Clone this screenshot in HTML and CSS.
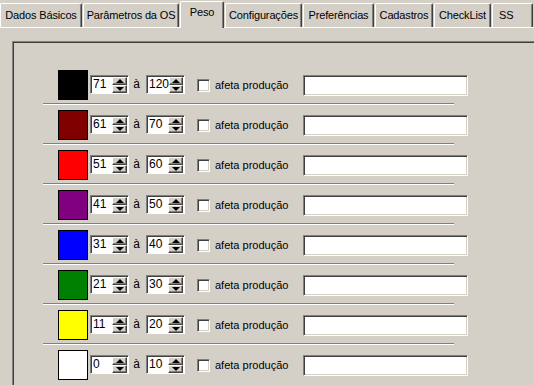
FILE: index.html
```html
<!DOCTYPE html>
<html lang="pt">
<head>
    <meta charset="UTF-8">
    <title>Peso</title>
    <link rel="stylesheet" href="styles.css">
</head>
<body>
    <div class="tabs">
        <div class="tab">Dados Básicos</div>
        <div class="tab">Parâmetros da OS</div>
        <div class="tab active">Peso</div>
        <div class="tab">Configurações</div>
        <div class="tab">Preferências</div>
        <div class="tab">Cadastros</div>
        <div class="tab">CheckList</div>
        <div class="tab">SS</div>
    </div>

    <div class="page">
        <div class="frame">

            <div class="row">
                <div class="fields">
                    <div class="swatch swatch-black"></div>
                    <div class="spin"><span class="spin-val">71</span><span class="spin-btns"><i class="up"></i><i class="down"></i></span></div>
                    <span class="ate">à</span>
                    <div class="spin"><span class="spin-val">120</span><span class="spin-btns"><i class="up"></i><i class="down"></i></span></div>
                    <span class="check"></span>
                    <label class="check-label">afeta produção</label>
                    <input class="obs" type="text">
                </div>
                <div class="sep"></div>
            </div>

            <div class="row">
                <div class="fields">
                    <div class="swatch swatch-maroon"></div>
                    <div class="spin"><span class="spin-val">61</span><span class="spin-btns"><i class="up"></i><i class="down"></i></span></div>
                    <span class="ate">à</span>
                    <div class="spin"><span class="spin-val">70</span><span class="spin-btns"><i class="up"></i><i class="down"></i></span></div>
                    <span class="check"></span>
                    <label class="check-label">afeta produção</label>
                    <input class="obs" type="text">
                </div>
                <div class="sep"></div>
            </div>

            <div class="row">
                <div class="fields">
                    <div class="swatch swatch-red"></div>
                    <div class="spin"><span class="spin-val">51</span><span class="spin-btns"><i class="up"></i><i class="down"></i></span></div>
                    <span class="ate">à</span>
                    <div class="spin"><span class="spin-val">60</span><span class="spin-btns"><i class="up"></i><i class="down"></i></span></div>
                    <span class="check"></span>
                    <label class="check-label">afeta produção</label>
                    <input class="obs" type="text">
                </div>
                <div class="sep"></div>
            </div>

            <div class="row">
                <div class="fields">
                    <div class="swatch swatch-purple"></div>
                    <div class="spin"><span class="spin-val">41</span><span class="spin-btns"><i class="up"></i><i class="down"></i></span></div>
                    <span class="ate">à</span>
                    <div class="spin"><span class="spin-val">50</span><span class="spin-btns"><i class="up"></i><i class="down"></i></span></div>
                    <span class="check"></span>
                    <label class="check-label">afeta produção</label>
                    <input class="obs" type="text">
                </div>
                <div class="sep"></div>
            </div>

            <div class="row">
                <div class="fields">
                    <div class="swatch swatch-blue"></div>
                    <div class="spin"><span class="spin-val">31</span><span class="spin-btns"><i class="up"></i><i class="down"></i></span></div>
                    <span class="ate">à</span>
                    <div class="spin"><span class="spin-val">40</span><span class="spin-btns"><i class="up"></i><i class="down"></i></span></div>
                    <span class="check"></span>
                    <label class="check-label">afeta produção</label>
                    <input class="obs" type="text">
                </div>
                <div class="sep"></div>
            </div>

            <div class="row">
                <div class="fields">
                    <div class="swatch swatch-green"></div>
                    <div class="spin"><span class="spin-val">21</span><span class="spin-btns"><i class="up"></i><i class="down"></i></span></div>
                    <span class="ate">à</span>
                    <div class="spin"><span class="spin-val">30</span><span class="spin-btns"><i class="up"></i><i class="down"></i></span></div>
                    <span class="check"></span>
                    <label class="check-label">afeta produção</label>
                    <input class="obs" type="text">
                </div>
                <div class="sep"></div>
            </div>

            <div class="row">
                <div class="fields">
                    <div class="swatch swatch-yellow"></div>
                    <div class="spin"><span class="spin-val">11</span><span class="spin-btns"><i class="up"></i><i class="down"></i></span></div>
                    <span class="ate">à</span>
                    <div class="spin"><span class="spin-val">20</span><span class="spin-btns"><i class="up"></i><i class="down"></i></span></div>
                    <span class="check"></span>
                    <label class="check-label">afeta produção</label>
                    <input class="obs" type="text">
                </div>
                <div class="sep"></div>
            </div>

            <div class="row">
                <div class="fields">
                    <div class="swatch swatch-white"></div>
                    <div class="spin"><span class="spin-val">0</span><span class="spin-btns"><i class="up"></i><i class="down"></i></span></div>
                    <span class="ate">à</span>
                    <div class="spin"><span class="spin-val">10</span><span class="spin-btns"><i class="up"></i><i class="down"></i></span></div>
                    <span class="check"></span>
                    <label class="check-label">afeta produção</label>
                    <input class="obs" type="text">
                </div>
            </div>

        </div>
    </div>
</body>
</html>
```

FILE: styles.css
```css
html, body {
    margin: 0;
    padding: 0;
    height: 100%;
    overflow: hidden;
}

body {
    font-family: "Liberation Sans", Arial, sans-serif;
    font-size: 11px;
    color: #000;
    background-color: #d4d0c8;
}

/* tab strip */

.tabs {
    display: flex;
    align-items: flex-end;
    gap: 1px;
    height: 27px;
    position: relative;
    z-index: 1;
}

.tab {
    box-sizing: border-box;
    height: 24px;
    display: flex;
    align-items: center;
    justify-content: center;
    padding-bottom: 1px;
    border-top: 1px solid #fff;
    border-left: 1px solid #fff;
    border-right: 1px solid #404040;
    box-shadow: inset -1px 0 0 #808080;
    border-radius: 2px 2px 0 0;
    white-space: nowrap;
    letter-spacing: -0.15px;
}

.tab:nth-child(1) { width: 82px; }
.tab:nth-child(2) { width: 96px; }
.tab:nth-child(3) { width: 44px; }
.tab:nth-child(4) { width: 77px; }
.tab:nth-child(5) { width: 71px; }
.tab:nth-child(6) { width: 58px; }
.tab:nth-child(7) { width: 57px; }
.tab:nth-child(8) { width: 41px; justify-content: flex-start; padding-left: 6px; }

.tab.active {
    height: 27px;
    margin-bottom: -1px;
    padding-bottom: 6px;
    background-color: #d4d0c8;
}

/* page body */

.page {
    border-top: 1px solid #fff;
    padding: 13px 0 0 12px;
}

.frame {
    box-sizing: border-box;
    width: 560px;
    height: 400px;
    border: 1px solid;
    border-color: #808080 #fff #fff #808080;
    box-shadow: inset 1px 1px 0 #404040;
    padding: 23px 0 0 1px;
}

.row .fields {
    display: flex;
    align-items: center;
    height: 38px;
    padding-left: 44px;
}

.sep {
    width: 411px;
    height: 0;
    margin-left: 29px;
    border-top: 1px solid #808080;
    border-bottom: 1px solid #fff;
}

.swatch {
    box-sizing: border-box;
    width: 30px;
    height: 30px;
    border: 1px solid #000;
    margin-top: 1px;
}

.swatch-black { background-color: #000; }
.swatch-maroon { background-color: #800000; }
.swatch-red { background-color: #ff0000; }
.swatch-purple { background-color: #800080; }
.swatch-blue { background-color: #0000ff; }
.swatch-green { background-color: #008000; }
.swatch-yellow { background-color: #ffff00; }
.swatch-white { background-color: #fff; }

/* spin edit */

.spin {
    box-sizing: border-box;
    display: flex;
    width: 39px;
    height: 19px;
    margin-left: 2px;
    background: #fff;
    border: 1px solid;
    border-color: #808080 #fff #fff #808080;
    box-shadow: inset 1px 1px 0 #404040;
}

.spin-val {
    flex: 1;
    padding: 1px 0 0 2px;
    line-height: 15px;
    font-size: 12px;
}

.spin-btns {
    display: flex;
    flex-direction: column;
    width: 15px;
    padding: 1px 1px 0 0;
}

.spin-btns i {
    box-sizing: border-box;
    flex: 1;
    display: flex;
    align-items: center;
    justify-content: center;
    background: #d4d0c8;
    border: 1px solid;
    border-color: #fff #404040 #404040 #fff;
    box-shadow: inset -1px -1px 0 #808080;
}

.spin-btns i::before {
    content: "";
    width: 0;
    height: 0;
    border-left: 4px solid transparent;
    border-right: 4px solid transparent;
}

.spin-btns .up::before { border-bottom: 4px solid #000; }
.spin-btns .down::before { border-top: 4px solid #000; }

.ate {
    width: 15px;
    text-align: center;
    font-size: 12px;
}

/* checkbox and text */

.check {
    box-sizing: border-box;
    width: 13px;
    height: 13px;
    margin-left: 12px;
    margin-top: 2px;
    background: #fff;
    border: 1px solid;
    border-color: #808080 #fff #fff #808080;
    box-shadow: inset 1px 1px 0 #404040, inset -1px -1px 0 #d4d0c8;
}

.check-label {
    width: 93px;
    padding-left: 5px;
    box-sizing: border-box;
    margin-top: 1px;
}

.obs {
    box-sizing: border-box;
    width: 165px;
    height: 21px;
    margin: 2px 0 0 0;
    padding: 0;
    background: #fff;
    border: 1px solid;
    border-color: #808080 #fff #fff #808080;
    box-shadow: inset 1px 1px 0 #404040, inset -1px -1px 0 #d4d0c8;
}
```
